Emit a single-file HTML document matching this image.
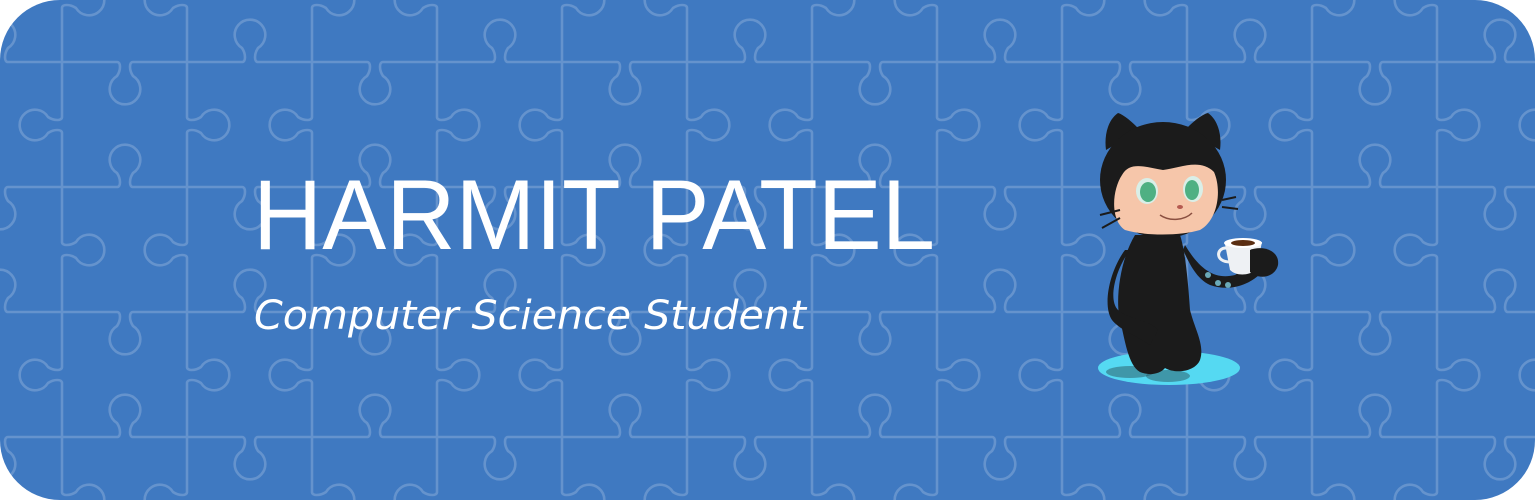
<!DOCTYPE html>
<html><head><meta charset="utf-8">
<style>
html,body{margin:0;padding:0;background:#fff;width:1535px;height:500px;overflow:hidden}
#c{position:absolute;left:0;top:0;width:1535px;height:500px;border-radius:60px;overflow:hidden;background:#3f79c1}
svg{position:absolute;left:0;top:0;display:block}
</style></head><body>
<div id="c">
<svg width="1535" height="500" id="bg"><path id="pz" fill="none" stroke="rgba(255,255,255,0.2)" stroke-width="2.6" d=""/></svg>
<svg width="1535" height="500">
<text x="253" y="249" font-family="Liberation Sans, sans-serif" font-size="99" fill="#fff" textLength="682" lengthAdjust="spacingAndGlyphs">HARMIT PATEL</text>
<text x="254" y="329" font-family="DejaVu Sans, sans-serif" font-style="italic" font-size="40" fill="#fff" textLength="552" lengthAdjust="spacingAndGlyphs">Computer Science Student</text>
<ellipse cx="1169" cy="368" rx="71" ry="17" fill="#55d9f2"/>
<ellipse cx="1130" cy="372" rx="24" ry="6" fill="#2a5560" opacity="0.5"/>
<ellipse cx="1168" cy="376" rx="22" ry="6" fill="#2a5560" opacity="0.5"/>
<path d="M1135 235 C1120 260 1115 300 1120 320 C1125 340 1128 365 1140 372 C1150 376 1160 374 1165 368 C1175 374 1195 372 1200 360 C1205 345 1195 330 1190 310 C1188 280 1185 250 1180 235 Z" fill="#1b1b1b"/>
<path d="M1130 250 C1115 270 1108 300 1118 310 C1130 320 1150 320 1158 330 L1150 345 C1135 335 1120 330 1112 320 C1102 305 1110 270 1125 250 Z" fill="#1b1b1b"/>
<path d="M1185 245 C1200 270 1215 280 1235 275 L1250 265 L1262 272 C1250 285 1230 292 1210 285 C1195 278 1188 260 1183 250 Z" fill="#1b1b1b"/>
<circle cx="1208" cy="275" r="3" fill="#6aa9b8"/><circle cx="1218" cy="283" r="3" fill="#6aa9b8"/><circle cx="1228" cy="285" r="3" fill="#6aa9b8"/>
<path d="M1225 244 L1262 242 L1256 270 C1248 276 1236 276 1230 270 Z" fill="#eef1f4"/>
<ellipse cx="1243" cy="243" rx="19" ry="5" fill="#fff"/><ellipse cx="1243" cy="243" rx="12" ry="3" fill="#5a2e12"/>
<path d="M1226 248 C1216 248 1215 262 1230 262" fill="none" stroke="#eef1f4" stroke-width="3"/>
<path d="M1250 250 C1262 245 1280 250 1278 265 C1275 278 1258 280 1250 272 Z" fill="#1b1b1b"/>
<path d="M1106 150 C1104 135 1108 120 1118 113 C1125 115 1135 125 1140 130 Z M1220 150 C1222 135 1218 120 1208 113 C1200 115 1190 125 1185 130 Z" fill="#1b1b1b"/>
<ellipse cx="1163" cy="180" rx="63" ry="58" fill="#1b1b1b"/>
<path d="M1122 175 C1130 160 1148 168 1163 170 C1180 168 1200 158 1214 172 C1222 190 1218 220 1200 230 C1180 236 1145 236 1125 230 C1110 220 1112 190 1122 175 Z" fill="#f6c6aa"/>
<ellipse cx="1147" cy="191" rx="11" ry="13" fill="#d9efe8"/><ellipse cx="1148" cy="192" rx="8" ry="10" fill="#4fb083"/>
<ellipse cx="1193" cy="189" rx="10" ry="13" fill="#d9efe8"/><ellipse cx="1192" cy="190" rx="7" ry="10" fill="#4fb083"/>
<ellipse cx="1180" cy="207" rx="3" ry="2" fill="#b55a50"/>
<path d="M1160 215 C1170 222 1185 220 1192 213" fill="none" stroke="#8a4f40" stroke-width="1.5"/>
<path d="M1100 215 L1120 210 M1102 228 L1120 218 M1222 200 L1236 197 M1222 207 L1238 209" stroke="#1b1b1b" stroke-width="2"/>
</svg>
</div>
<script>
var d="",r=15.3;
for(var j=-1;j<5;j++){var y=62+125*j;d+="M-60 "+y;
 for(var i=0;i<14;i++){var cx=125*i,dd=((i+j)%2+2)%2==0?-1:1,s=dd==1?0:1;
  d+=" L"+(cx-8)+" "+y+" C"+(cx-4)+" "+y+" "+(cx-4)+" "+(y+8*dd)+" "+(cx-8)+" "+(y+14*dd)+" A"+r+" "+r+" 0 1 "+s+" "+(cx+8)+" "+(y+14*dd)+" C"+(cx+4)+" "+(y+8*dd)+" "+(cx+4)+" "+y+" "+(cx+8)+" "+y;}
 d+=" L1700 "+y+" ";}
for(var i=-1;i<14;i++){var x=62+125*i;d+="M"+x+" -60";
 for(var j=0;j<6;j++){var cy=125*j,e=((i+j)%2+2)%2==0?1:-1,s=e==1?1:0;
  d+=" L"+x+" "+(cy-8)+" C"+x+" "+(cy-4)+" "+(x+8*e)+" "+(cy-4)+" "+(x+14*e)+" "+(cy-8)+" A"+r+" "+r+" 0 1 "+s+" "+(x+14*e)+" "+(cy+8)+" C"+(x+8*e)+" "+(cy+4)+" "+x+" "+(cy+4)+" "+x+" "+(cy+8);}
 d+=" L"+x+" 700 ";}
document.getElementById("pz").setAttribute("d",d);
</script>
</body></html>
